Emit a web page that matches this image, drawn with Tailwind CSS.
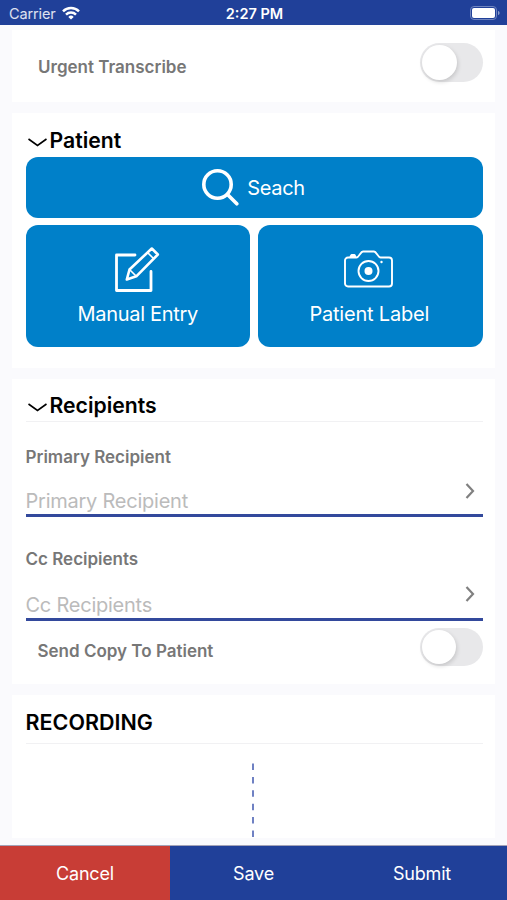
<!DOCTYPE html>
<html lang="en">
<head>
    <meta charset="UTF-8" />
    <meta name="viewport" content="width=device-width, initial-scale=1.0" />
    <title>New Dictation</title>
    <script src="https://cdn.jsdelivr.net/npm/@tailwindcss/browser@4"></script>
</head>
<body class="font-[Inter,'Liberation_Sans',sans-serif] bg-[#fafafd] text-black w-[507px] h-[900px] overflow-hidden flex flex-col whitespace-nowrap">
    <!-- Status bar -->
    <header class="h-[25px] shrink-0 bg-[#204099] text-white grid grid-cols-3 items-center pl-[9px] pr-[7px] pt-[3px]">
        <div class="flex items-center gap-[6px]">
            <span class="text-[14.5px] leading-5 text-white/85 tracking-[-0.01em]">Carrier</span>
            <svg class="w-[18px] h-[14px] -mt-[2px]" viewBox="0 0 18 14" fill="none" stroke="white" stroke-width="2.5">
                <path d="M1 5.3a11.5 11.5 0 0 1 16 0" />
                <path d="M4 8.6a7.2 7.2 0 0 1 10 0" />
                <path d="M6.3 10.9a3.9 3.9 0 0 1 5.4 0L9 13.6z" fill="white" stroke="none" />
            </svg>
        </div>
        <span class="text-center text-[14.5px] leading-5 font-semibold">2:27 PM</span>
        <svg class="w-[30px] h-[14px] justify-self-end -mt-[2px]" viewBox="0 0 30 14" fill="none">
            <rect x="0.5" y="0.5" width="26" height="13" rx="3.5" stroke="#6f84bf" />
            <rect x="2" y="2" width="23" height="10" rx="2" fill="white" />
            <path d="M28 5v4c1.2-.4 1.6-1.2 1.6-2S29.2 5.4 28 5z" fill="#8c9dcb" />
        </svg>
    </header>

    <main class="flex-1 flex flex-col gap-[11px] px-[12px] pt-[5px]">
        <section class="h-[72px] bg-white flex items-center justify-between pl-[26px] pr-[12px] pb-[7px]">
            <span class="text-[17px] leading-5 font-semibold text-[#777] mt-[8px]">Urgent Transcribe</span>
            <div class="w-[63px] h-[39px] rounded-full bg-[#e8e8ea] p-[2px]">
                <div class="size-[35px] rounded-full bg-white shadow-[1px_2px_4px_rgba(0,0,0,0.15)]"></div>
            </div>
        </section>

        <!-- Patient -->
        <section class="h-[255px] bg-white pl-[13.5px] pr-[12.5px] pt-[13px]">
            <h2 class="flex items-center h-[30.5px] pb-px pl-[2px] gap-[3px] text-[21.2px] font-semibold">
                <svg class="w-[19px] h-[9px] mt-[3px]" viewBox="0 0 19 9" fill="none" stroke="black" stroke-width="1.6"><path d="M.5 1l9 6.5L18.5 1" /></svg>
                <span>Patient</span>
            </h2>
            <button class="w-full h-[61px] rounded-xl bg-[#0080c9] text-white flex items-center justify-center gap-[8px] mb-[7.5px]">
                <svg class="size-[37px] -ml-px" viewBox="0 0 37 37" fill="none" stroke="white" stroke-width="3.6" stroke-linecap="round">
                    <circle cx="15.5" cy="15.5" r="13.7" />
                    <path d="M25.5 25.5l9.3 9.3" />
                </svg>
                <span class="text-[20px] tracking-[-0.015em] mt-[2px]">Seach</span>
            </button>
            <div class="grid grid-cols-2 gap-2">
                <button class="h-[122px] rounded-xl bg-[#0080c9] text-white flex flex-col items-center pt-[21px]">
                    <svg class="w-[46px] h-[47px] -ml-[2px]" viewBox="0 0 46 47" fill="none" stroke="white" stroke-width="2.8" stroke-linejoin="round">
                        <path d="M21 9H2.5v35.500h34.500V25.500" stroke-linecap="round" />
                        <path d="M12.800 33.500l2.700-10L37.800 2.500l6 6-21.500 21.800z" stroke-width="2.600" />
                        <path d="M15.500 23.500l6.800 6.800M33.500 6.500l6 6" stroke-width="1.600" />
                    </svg>
                    <span class="text-[20px] leading-6 mt-[9px] tracking-[-0.015em]">Manual Entry</span>
                </button>
                <button class="h-[122px] rounded-xl bg-[#0080c9] text-white flex flex-col items-center pt-[25px]">
                    <svg class="w-[49px] h-[38px] -ml-[3px]" viewBox="0 0 49 38" fill="none" stroke="white" stroke-width="1.9" stroke-linejoin="round">
                        <path d="M4 7.5H12.5C15 7.5 16.5 1.5 19 1.5H30C32.5 1.5 34 7.5 36.5 7.5H45a3 3 0 0 1 3 3V33.5a3 3 0 0 1-3 3H4a3 3 0 0 1-3-3V10.5a3 3 0 0 1 3-3z" />
                        <path d="M6.5 6.5l1-1.5h3l.8 1.5z" fill="white" />
                        <circle cx="24.5" cy="21" r="10" />
                        <circle cx="24.5" cy="21" r="4" fill="white" stroke="none" />
                        <circle cx="37.5" cy="12" r="1.2" fill="white" stroke="none" />
                    </svg>
                    <span class="text-[20px] leading-6 mt-[14px] tracking-[-0.01em] -ml-[2px]">Patient Label</span>
                </button>
            </div>
        </section>

        <!-- Recipients -->
        <section class="h-[305px] bg-white pl-[13.5px] pr-[12.5px] pt-[12px]">
            <h2 class="flex items-center h-[31px] pl-[2px] gap-[3px] text-[21.2px] font-semibold border-b border-[#f1f1f3]">
                <svg class="w-[19px] h-[9px] mt-[3px]" viewBox="0 0 19 9" fill="none" stroke="black" stroke-width="1.6"><path d="M.5 1l9 6.5L18.5 1" /></svg>
                <span>Recipients</span>
            </h2>
            <div class="pt-[25px] h-[94.5px] border-b-[3px] border-[#33499c]">
                <p class="text-[17px] leading-5 font-semibold text-[#777]">Primary Recipient</p>
                <div class="flex items-center justify-between pt-[12px] pr-2">
                    <span class="text-[20px] leading-6 text-[#bbb] pt-[10px] tracking-[-0.012em]">Primary Recipient</span>
                    <svg class="w-[10px] h-[16px] -mt-[11px]" viewBox="0 0 10 16" fill="none" stroke="#808080" stroke-width="2.2"><path d="M1.5 1l6.5 7-6.5 7" /></svg>
                </div>
            </div>
            <div class="pt-[32px] h-[104px] border-b-[3px] border-[#33499c]">
                <p class="text-[17px] leading-5 font-semibold text-[#777]">Cc Recipients</p>
                <div class="flex items-center justify-between pt-[14px] pr-2">
                    <span class="text-[20px] leading-6 text-[#bbb] pt-[10px] tracking-[-0.012em]">Cc Recipients</span>
                    <svg class="w-[10px] h-[16px] -mt-[12px]" viewBox="0 0 10 16" fill="none" stroke="#808080" stroke-width="2.2"><path d="M1.5 1l6.5 7-6.5 7" /></svg>
                </div>
            </div>
            <div class="flex items-center justify-between pl-[12px] pt-[7px]">
                <span class="text-[17px] leading-5 font-semibold text-[#777] mt-[8px]">Send Copy To Patient</span>
                <div class="w-[63px] h-[38px] rounded-full bg-[#e8e8ea] p-[2px]">
                    <div class="size-[34px] rounded-full bg-white shadow-[1px_2px_4px_rgba(0,0,0,0.15)]"></div>
                </div>
            </div>
        </section>

        <!-- Recording -->
        <section class="h-[143px] bg-white pl-[13.5px] pr-[12.5px] pt-[12px]">
            <h2 class="h-[37px] text-[21.5px] leading-[30px] font-semibold border-b border-[#f1f1f3]">RECORDING</h2>
            <svg class="w-[2px] h-[74px] mt-[19px] ml-[226.5px]" viewBox="0 0 2 74"><path d="M1 .5V74" stroke="#4058b0" stroke-width="1.5" stroke-dasharray="6.5 6.9" /></svg>
        </section>
    </main>

    <!-- Bottom actions -->
    <footer class="h-[55px] shrink-0 grid grid-cols-3 text-white text-[18px] tracking-[-0.01em] border-t border-[#a3a3b8]">
        <button class="bg-[#c83d36] -mr-px">Cancel</button>
        <button class="bg-[#204099] ml-px pr-px">Save</button>
        <button class="bg-[#204099] pr-px">Submit</button>
    </footer>
</body>
</html>
